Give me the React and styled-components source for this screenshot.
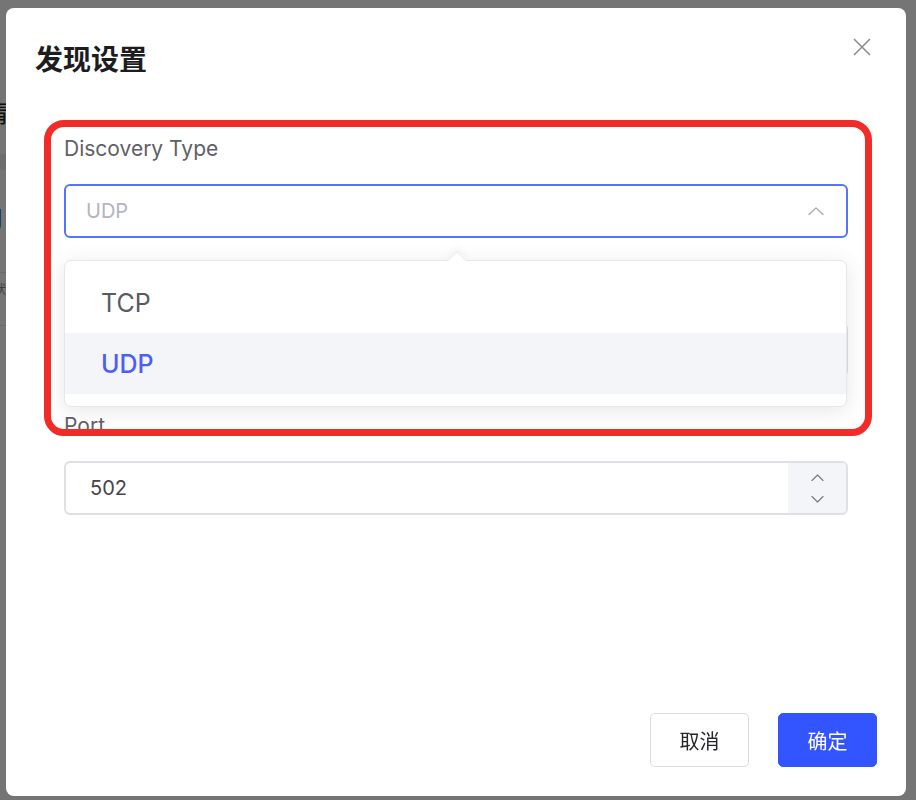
import React from "react";
import styled, { createGlobalStyle } from "styled-components";

const GlobalStyle = createGlobalStyle`
  html, body { margin: 0; padding: 0; }
  body {
    width: 916px;
    height: 800px;
    overflow: hidden;
    font-family: "Inter", "Noto Sans CJK SC", sans-serif;
    -webkit-font-smoothing: antialiased;
  }
  * { box-sizing: border-box; }
`;

/* ---------- page behind the dialog ---------- */
const Page = styled.div`
  width: 916px;
  height: 800px;
  background: #fff;
  overflow: hidden;
  display: flex;
  flex-direction: column;
  padding-top: 96px;
  margin-left: -16px;
`;

const PageHeading = styled.div`
  font-size: 24px;
  line-height: 32px;
  color: #222;
  font-family: "Noto Sans CJK SC", sans-serif;
`;

const TabBand = styled.div`
  margin-top: 26px;
  height: 16px;
  background: #eceef2;
`;

const BigValue = styled.div`
  margin-top: 32px;
  margin-left: -6px;
  font-size: 34px;
  line-height: 40px;
  font-weight: 500;
  color: #000;
`;

const Divider = styled.div`
  height: 1px;
  background: #e3e4e8;
  margin-top: ${(p) => p.$gap}px;
`;

const SmallText = styled.div`
  margin-top: 8px;
  padding-left: 10px;
  font-size: 12px;
  line-height: 16px;
  color: #888;
  font-family: "Noto Sans CJK SC", sans-serif;
`;

/* ---------- dialog ---------- */
const Mask = styled.div`
  position: fixed;
  inset: 0;
  background: rgba(0, 0, 0, 0.54);
  display: flex;
  align-items: flex-start;
  padding: 8px 10px 4px 6px;
`;

const Dialog = styled.div`
  position: relative;
  width: 900px;
  height: 788px;
  background: #fff;
  border-radius: 8px;
  display: flex;
  flex-direction: column;
`;

const Header = styled.div`
  padding: 30px 0 0 29px;
  display: flex;
  align-items: center;
`;

const Title = styled.h2`
  margin: 0;
  font-family: "Noto Sans CJK SC", sans-serif;
  font-size: 28px;
  line-height: 40px;
  font-weight: 700;
  color: #1d1d1f;
`;

const CloseButton = styled.button`
  position: absolute;
  top: 30px;
  right: 35px;
  width: 18px;
  height: 18px;
  padding: 0;
  border: 0;
  background: none;
  cursor: pointer;
  display: flex;
`;

const Form = styled.div`
  padding: 57px 58px 0 58px;
  display: flex;
  flex-direction: column;
`;

const FormItem = styled.div`
  display: flex;
  flex-direction: column;
  margin-bottom: 35.5px;
`;

const Label = styled.label`
  height: 28px;
  font-size: 21px;
  line-height: 28px;
  color: #606067;
  margin-bottom: 21px;
`;

const SelectWrap = styled.div`
  position: relative;
`;

const SelectBox = styled.div`
  height: 54px;
  border: 2px solid #5873fb;
  border-radius: 6px;
  padding: 0 22px 0 20px;
  display: flex;
  align-items: center;
  justify-content: space-between;
  background: #fff;
`;

const Placeholder = styled.span`
  font-size: 20px;
  color: #b3b4bd;
`;

const Dropdown = styled.div`
  position: absolute;
  top: calc(100% + 22px);
  left: 0;
  right: 1px;
  z-index: 5;
  background: #fff;
  border: 1px solid #e6e7ec;
  border-radius: 7px;
  padding: 11px 0 12px;
  box-shadow: 0 4px 22px rgba(20, 24, 40, 0.1);

  &::before {
    content: "";
    position: absolute;
    top: -7px;
    left: 50%;
    width: 13px;
    height: 13px;
    margin-left: -6px;
    background: #fff;
    border-left: 1px solid #eceef2;
    border-top: 1px solid #eceef2;
    transform: rotate(45deg);
    box-shadow: -3px -3px 6px rgba(20, 24, 40, 0.04);
  }
`;

const Option = styled.div`
  position: relative;
  height: 61px;
  padding-left: 36px;
  display: flex;
  align-items: center;
  font-size: 25px;
  font-weight: ${(p) => (p.$active ? 500 : 400)};
  color: ${(p) => (p.$active ? "#4b5ef5" : "#5a5a60")};
  background: ${(p) => (p.$active ? "#f4f5f9" : "transparent")};
`;

const InputBox = styled.div`
  height: 54px;
  border: 2px solid #dfe0e5;
  border-radius: 6px;
  display: flex;
  align-items: stretch;
  overflow: hidden;
  background: #fff;
`;

const InputText = styled.span`
  flex: 1;
  display: flex;
  align-items: center;
  padding-left: 24px;
  font-size: 20px;
  color: #45454b;
`;

const Stepper = styled.div`
  width: 58px;
  background: #f4f5f9;
  display: flex;
  flex-direction: column;
  align-items: center;
  justify-content: center;
  gap: 15px;
`;

const Footer = styled.div`
  margin-top: auto;
  padding: 0 29px 29px 0;
  display: flex;
  justify-content: flex-end;
  gap: 29px;
`;

const Button = styled.button`
  width: 99px;
  height: 54px;
  border-radius: 5px;
  font-family: "Noto Sans CJK SC", sans-serif;
  font-size: 20px;
  cursor: pointer;
  border: 1px solid ${(p) => (p.$primary ? "#3355ff" : "#dadbe0")};
  background: ${(p) => (p.$primary ? "#3355ff" : "#fff")};
  color: ${(p) => (p.$primary ? "#fff" : "#26262a")};
`;

/* annotation frame drawn over the first form rows */
const Highlight = styled.div`
  position: absolute;
  left: 38px;
  top: 112px;
  width: 828px;
  height: 316px;
  border: 7px solid #f12b25;
  border-radius: 20px;
  z-index: 10;
  pointer-events: none;
`;

const Chevron = ({ dir = "up", w = 16, h = 8, color = "#a9aab2", sw = 1.4 }) => (
  <svg width={w} height={h} viewBox={`0 0 ${w} ${h}`} fill="none">
    <polyline
      points={
        dir === "up"
          ? `1,${h - 0.5} ${w / 2},1 ${w - 1},${h - 0.5}`
          : `1,0.5 ${w / 2},${h - 1} ${w - 1},0.5`
      }
      stroke={color}
      strokeWidth={sw}
      strokeLinecap="round"
      strokeLinejoin="round"
    />
  </svg>
);

const CloseIcon = () => (
  <svg width="18" height="18" viewBox="0 0 18 18" fill="none">
    <path d="M1 1L17 17M17 1L1 17" stroke="#8b8b94" strokeWidth="1.6" />
  </svg>
);

export default function App() {
  return (
    <>
      <GlobalStyle />
      <Page>
        <PageHeading>情</PageHeading>
        <TabBand />
        <BigValue>U</BigValue>
        <Divider $gap={30} />
        <SmallText>状</SmallText>
        <Divider $gap={28} />
      </Page>
      <Mask>
        <Dialog>
          <Header>
            <Title>发现设置</Title>
          </Header>
          <CloseButton aria-label="关闭">
            <CloseIcon />
          </CloseButton>

          <Form>
            <FormItem>
              <Label>Discovery Type</Label>
              <SelectWrap>
                <SelectBox>
                  <Placeholder>UDP</Placeholder>
                  <Chevron dir="up" />
                </SelectBox>
                <Dropdown>
                  <Option>TCP</Option>
                  <Option $active>UDP</Option>
                </Dropdown>
              </SelectWrap>
            </FormItem>

            {/* field underneath the open list */}
            <FormItem>
              <Label />
              <InputBox />
            </FormItem>

            <FormItem>
              <Label>Port</Label>
              <InputBox>
                <InputText>502</InputText>
                <Stepper>
                  <Chevron dir="up" w={13} h={7} color="#7a7a82" sw={1.2} />
                  <Chevron dir="down" w={13} h={7} color="#7a7a82" sw={1.2} />
                </Stepper>
              </InputBox>
            </FormItem>
          </Form>

          <Footer>
            <Button>取消</Button>
            <Button $primary>确定</Button>
          </Footer>

          <Highlight />
        </Dialog>
      </Mask>
    </>
  );
}
